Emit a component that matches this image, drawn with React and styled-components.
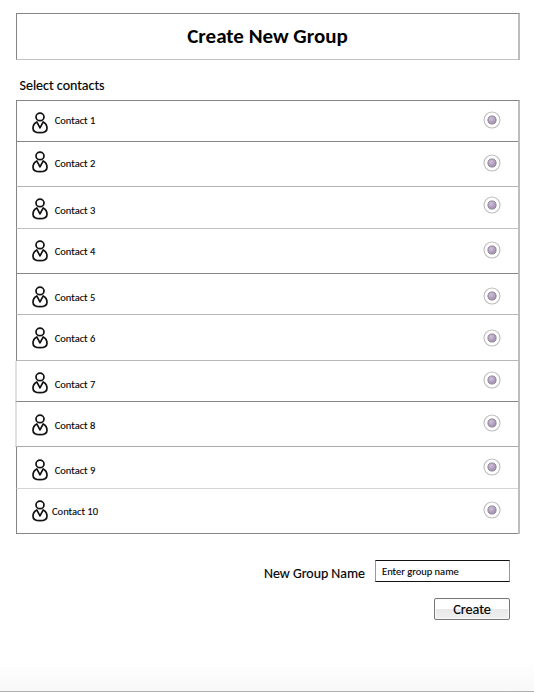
import React from "react";
import styled, { createGlobalStyle } from "styled-components";

const GlobalStyle = createGlobalStyle`
  * { box-sizing: border-box; }
  body { margin: 0; background: #fff; color: #000; font-family: Carlito, Lato, "Open Sans", sans-serif; }
`;

const Page = styled.main`
  width: 534px;
  height: 692px;
  padding: 13px 14px 0 16px;
  overflow: hidden;
  background: linear-gradient(#fff 660px, #f8f8f8 691px);
  border-bottom: 1px solid #b0b0b0;
`;

const Header = styled.header`
  display: flex;
  justify-content: center;
  width: 504px;
  height: 47px;
  padding: 10px 0 0 0;
  border: 1px solid #858585;
  border-right: 2px solid #bdbdbd;
  border-bottom-color: #c0c0c0;
  background: #fff;
`;

const Title = styled.h1`
  margin: 0;
  font-size: 21px;
  line-height: 24px;
  font-weight: 700;
  letter-spacing: 0;
  white-space: nowrap;
`;

const Subtitle = styled.h2`
  margin: 17px 0 6px 3.5px;
  font-size: 14px;
  line-height: 17px;
  font-weight: 400;
  letter-spacing: 0;
  -webkit-text-stroke: 0.15px #000;
`;

const List = styled.ul`
  list-style: none;
  width: 504px;
  margin: 0;
  padding: 0;
  border-top: 1px solid #858585;
  border-right: 2px solid #bdbdbd;
`;

const Row = styled.li`
  display: grid;
  grid-template-columns: ${(p) => (p.$wide ? 20 : 22.7)}px 1fr 18px;
  align-items: start;
  height: ${(p) => p.$height}px;
  margin-left: ${(p) => (p.$soft ? -1 : 0)}px;
  padding: 0 17px 0 15px;
  border-left: ${(p) => (p.$soft ? "2px solid #e0e0e0" : "1px solid #858585")};
  border-bottom: 1px solid ${(p) => p.$line};
  & > :first-child { margin-top: ${(p) => p.$icon}px; }
  & > :nth-child(2) { margin-top: ${(p) => p.$text}px; }
  & > :last-child { margin-top: ${(p) => p.$radio}px; }
`;

const PersonSvg = styled.svg`
  display: block;
  width: 16px;
  height: 22px;
  margin-left: -0.5px;
  fill: none;
  stroke: #111;
  stroke-width: 1.7;
  stroke-linejoin: round;
`;

const Name = styled.span`
  font-size: 10.5px;
  line-height: 14px;
  white-space: nowrap;
  -webkit-text-stroke: 0.1px #000;
`;

const RadioSvg = styled.svg`
  display: block;
  width: 18px;
  height: 18px;
`;

const FormRow = styled.div`
  display: flex;
  width: 494px;
  margin-top: 26px;
  justify-content: flex-end;
`;

const Label = styled.label`
  margin: 5px 10px 0 0;
  font-size: 13.9px;
  line-height: 17px;
  white-space: nowrap;
  -webkit-text-stroke: 0.15px #000;
`;

const Input = styled.input`
  width: 135px;
  height: 22px;
  padding: 1px 0 0 6px;
  border: 1px solid #111;
  border-left-color: #999;
  border-right-color: #999;
  border-radius: 0;
  background: #fff;
  outline: none;
  font-family: inherit;
  font-size: 10.5px;
  &::placeholder { color: #000; opacity: 1; -webkit-text-stroke: 0.1px #000; }
`;

const Actions = styled.div`
  display: flex;
  justify-content: flex-end;
  width: 494px;
  margin-top: 16px;
`;

const CreateButton = styled.button`
  width: 76px;
  height: 22px;
  padding: 0;
  border: 1px solid #777;
  border-radius: 2px;
  background: linear-gradient(#fff 0 10px, #e8e8e8 10px, #f0f0f0);
  box-shadow: inset 0 0 0 1px #fafafa;
  color: #000;
  font-family: inherit;
  font-size: 14.2px;
  line-height: 18px;
  -webkit-text-stroke: 0.15px #000;
`;

const contacts = [
  { height: 41, line: "#858585", icon: 11, text: 13, radio: 10 },
  { height: 45, line: "#b5b5b5", icon: 9, text: 15, radio: 12.4 },
  { height: 42, line: "#c0c0c0", icon: 11, text: 17, radio: 9 },
  { height: 45, line: "#858585", icon: 11, text: 16, radio: 12 },
  { height: 41, line: "#b8b8b8", icon: 12, text: 17, radio: 13.3 },
  { height: 46, line: "#b8b8b8", icon: 12, text: 17, radio: 13.5 },
  { height: 41, line: "#858585", icon: 11, text: 17, radio: 10 },
  { height: 45, line: "#aaaaaa", icon: 11.5, text: 17, radio: 12.4 },
  { height: 42, line: "#d5d5d5", icon: 11.5, text: 17, radio: 10.5 },
  { height: 45, line: "#858585", icon: 11, text: 16, radio: 12 },
].map((row, i) => ({ ...row, soft: i === 6 || i === 7 }));

function Person() {
  return (
    <PersonSvg viewBox="0 0 16 22" aria-hidden="true">
      <ellipse cx="8" cy="4.9" rx="4" ry="3.7" />
      <path d="M4.8 9.9C2.2 11.2 1 13.6 1 16.2C1 19.4 4 20.7 8 20.7S15 19.4 15 16.2C15 13.6 13.8 11.2 11.2 9.9L8 15.9Z" />
    </PersonSvg>
  );
}

function Radio() {
  return (
    <RadioSvg viewBox="0 0 18 18" role="radio" aria-checked="true">
      <defs>
        <radialGradient id="bead" cx="40%" cy="35%" r="70%">
          <stop offset="0" stopColor="#d0c0dc" />
          <stop offset="1" stopColor="#9c88aa" />
        </radialGradient>
      </defs>
      <circle cx="9" cy="9" r="8" fill="#fff" stroke="#bcbcbc" strokeWidth="1.1" />
      <circle cx="9" cy="9" r="4.1" fill="url(#bead)" stroke="#8d8494" strokeWidth="0.9" />
    </RadioSvg>
  );
}

export default function App() {
  return (
    <Page>
      <GlobalStyle />
      <Header><Title>Create New Group</Title></Header>
      <Subtitle>Select contacts</Subtitle>
      <List>
        {contacts.map((c, i) => (
          <Row key={i} $height={c.height} $line={c.line} $icon={c.icon} $text={c.text} $radio={c.radio} $soft={c.soft} $wide={i === 9}>
            <Person />
            <Name>Contact {i + 1}</Name>
            <Radio />
          </Row>
        ))}
      </List>
      <FormRow>
        <Label htmlFor="group-name">New Group Name</Label>
        <Input id="group-name" placeholder="Enter group name" />
      </FormRow>
      <Actions><CreateButton>Create</CreateButton></Actions>
    </Page>
  );
}
